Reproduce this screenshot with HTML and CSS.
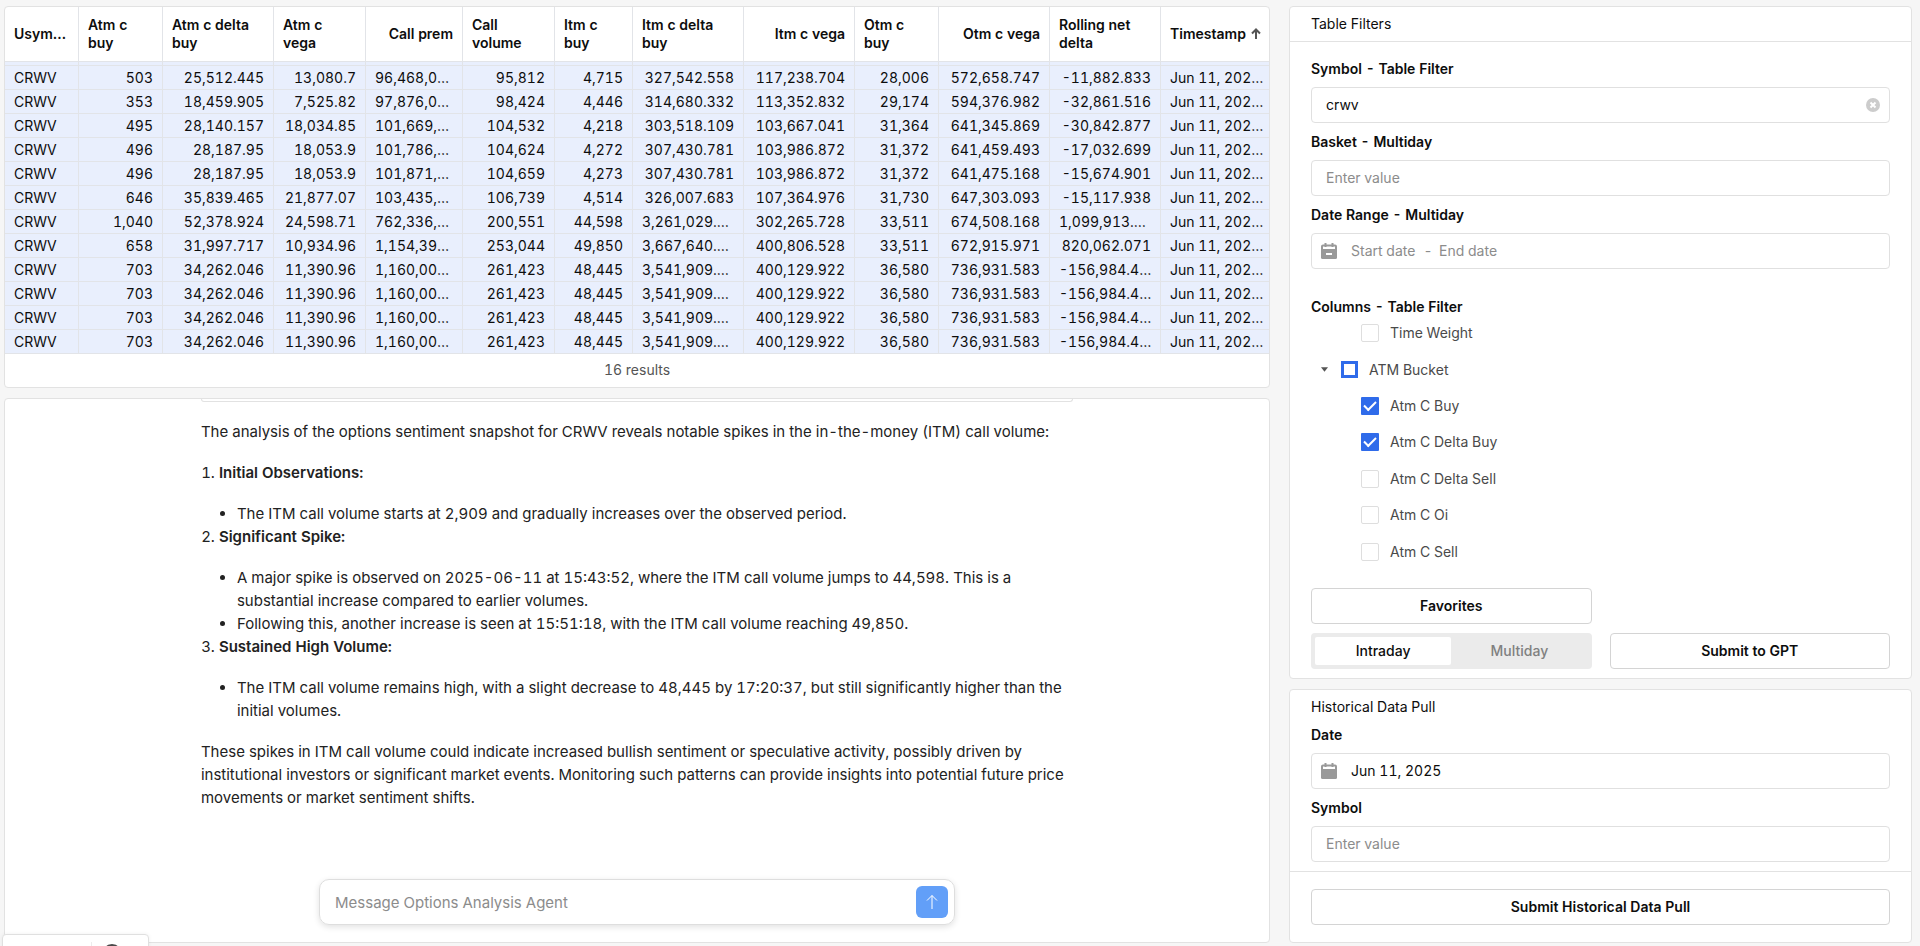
FILE: index.html
```html
<!DOCTYPE html>
<html lang="en">
<head>
  <meta charset="UTF-8">
  <meta name="viewport" content="width=device-width, initial-scale=1.0">
  <title>Options Analysis</title>
  <link rel="stylesheet" href="styles.css">
</head>

<body>
  <main class="main">
    <section class="card table-card">
      <table class="data">
        <colgroup>
          <col class="w-symbol"><col class="w-buy"><col class="w-wide"><col class="w-mid"><col class="w-prem">
          <col class="w-mid"><col class="w-itm"><col class="w-wide"><col class="w-wide"><col class="w-buy">
          <col class="w-wide"><col class="w-wide"><col class="w-wide">
        </colgroup>
        <thead>
          <tr>
            <th class="left">Usym…</th>
            <th class="left">Atm c buy</th>
            <th class="left">Atm c delta buy</th>
            <th class="left">Atm c vega</th>
            <th>Call prem</th>
            <th class="left">Call volume</th>
            <th class="left">Itm c buy</th>
            <th class="left">Itm c delta buy</th>
            <th>Itm c vega</th>
            <th class="left">Otm c buy</th>
            <th>Otm c vega</th>
            <th class="left">Rolling net delta</th>
            <th class="left sorted">Timestamp
              <svg class="sort" viewBox="0 0 12 12"><path d="M6 11V1.5M2 5.5l4-4 4 4"/></svg>
            </th>
          </tr>
        </thead>
        <tbody>
          <tr class="sliver"><td></td><td></td><td></td><td></td><td></td><td></td><td></td><td></td><td></td><td></td><td></td><td></td><td></td></tr>
          <tr><td class="left">CRWV</td><td>503</td><td>25,512.445</td><td>13,080.7</td><td class="left">96,468,0…</td><td>95,812</td><td>4,715</td><td>327,542.558</td><td>117,238.704</td><td>28,006</td><td>572,658.747</td><td>-11,882.833</td><td class="left">Jun 11, 202…</td></tr>
          <tr><td class="left">CRWV</td><td>353</td><td>18,459.905</td><td>7,525.82</td><td class="left">97,876,0…</td><td>98,424</td><td>4,446</td><td>314,680.332</td><td>113,352.832</td><td>29,174</td><td>594,376.982</td><td>-32,861.516</td><td class="left">Jun 11, 202…</td></tr>
          <tr><td class="left">CRWV</td><td>495</td><td>28,140.157</td><td>18,034.85</td><td class="left">101,669,…</td><td>104,532</td><td>4,218</td><td>303,518.109</td><td>103,667.041</td><td>31,364</td><td>641,345.869</td><td>-30,842.877</td><td class="left">Jun 11, 202…</td></tr>
          <tr><td class="left">CRWV</td><td>496</td><td>28,187.95</td><td>18,053.9</td><td class="left">101,786,…</td><td>104,624</td><td>4,272</td><td>307,430.781</td><td>103,986.872</td><td>31,372</td><td>641,459.493</td><td>-17,032.699</td><td class="left">Jun 11, 202…</td></tr>
          <tr><td class="left">CRWV</td><td>496</td><td>28,187.95</td><td>18,053.9</td><td class="left">101,871,…</td><td>104,659</td><td>4,273</td><td>307,430.781</td><td>103,986.872</td><td>31,372</td><td>641,475.168</td><td>-15,674.901</td><td class="left">Jun 11, 202…</td></tr>
          <tr><td class="left">CRWV</td><td>646</td><td>35,839.465</td><td>21,877.07</td><td class="left">103,435,…</td><td>106,739</td><td>4,514</td><td>326,007.683</td><td>107,364.976</td><td>31,730</td><td>647,303.093</td><td>-15,117.938</td><td class="left">Jun 11, 202…</td></tr>
          <tr><td class="left">CRWV</td><td>1,040</td><td>52,378.924</td><td>24,598.71</td><td class="left">762,336,…</td><td>200,551</td><td>44,598</td><td class="left">3,261,029.…</td><td>302,265.728</td><td>33,511</td><td>674,508.168</td><td class="left">1,099,913.…</td><td class="left">Jun 11, 202…</td></tr>
          <tr><td class="left">CRWV</td><td>658</td><td>31,997.717</td><td>10,934.96</td><td class="left">1,154,39…</td><td>253,044</td><td>49,850</td><td class="left">3,667,640.…</td><td>400,806.528</td><td>33,511</td><td>672,915.971</td><td>820,062.071</td><td class="left">Jun 11, 202…</td></tr>
          <tr><td class="left">CRWV</td><td>703</td><td>34,262.046</td><td>11,390.96</td><td class="left">1,160,00…</td><td>261,423</td><td>48,445</td><td class="left">3,541,909.…</td><td>400,129.922</td><td>36,580</td><td>736,931.583</td><td class="left">-156,984.4…</td><td class="left">Jun 11, 202…</td></tr>
          <tr><td class="left">CRWV</td><td>703</td><td>34,262.046</td><td>11,390.96</td><td class="left">1,160,00…</td><td>261,423</td><td>48,445</td><td class="left">3,541,909.…</td><td>400,129.922</td><td>36,580</td><td>736,931.583</td><td class="left">-156,984.4…</td><td class="left">Jun 11, 202…</td></tr>
          <tr><td class="left">CRWV</td><td>703</td><td>34,262.046</td><td>11,390.96</td><td class="left">1,160,00…</td><td>261,423</td><td>48,445</td><td class="left">3,541,909.…</td><td>400,129.922</td><td>36,580</td><td>736,931.583</td><td class="left">-156,984.4…</td><td class="left">Jun 11, 202…</td></tr>
          <tr><td class="left">CRWV</td><td>703</td><td>34,262.046</td><td>11,390.96</td><td class="left">1,160,00…</td><td>261,423</td><td>48,445</td><td class="left">3,541,909.…</td><td>400,129.922</td><td>36,580</td><td>736,931.583</td><td class="left">-156,984.4…</td><td class="left">Jun 11, 202…</td></tr>
        </tbody>
      </table>
      <div class="results">16 results</div>
    </section>

    <section class="card chat">
      <div class="message">
        <div class="previous"></div>
        <p>The analysis of the options sentiment snapshot for CRWV reveals notable spikes in the in-the-money (ITM) call volume:</p>
        <ol>
          <li><strong>Initial Observations:</strong>
            <ul>
              <li>The ITM call volume starts at 2,909 and gradually increases over the observed period.</li>
            </ul>
          </li>
          <li><strong>Significant Spike:</strong>
            <ul>
              <li>A major spike is observed on 2025-06-11 at 15:43:52, where the ITM call volume jumps to 44,598. This is a substantial increase compared to earlier volumes.</li>
              <li>Following this, another increase is seen at 15:51:18, with the ITM call volume reaching 49,850.</li>
            </ul>
          </li>
          <li><strong>Sustained High Volume:</strong>
            <ul>
              <li>The ITM call volume remains high, with a slight decrease to 48,445 by 17:20:37, but still significantly higher than the initial volumes.</li>
            </ul>
          </li>
        </ol>
        <p>These spikes in ITM call volume could indicate increased bullish sentiment or speculative activity, possibly driven by institutional investors or significant market events. Monitoring such patterns can provide insights into potential future price movements or market sentiment shifts.</p>
      </div>
      <form class="composer">
        <input type="text" placeholder="Message Options Analysis Agent" aria-label="Message">
        <button type="button" class="send" aria-label="Send">
          <svg viewBox="0 0 18 18"><path d="M9 16V2.5M4 7.5l5-5 5 5"/></svg>
        </button>
      </form>
    </section>
  </main>

  <aside class="side">
    <section class="card filters">
      <h2 class="card-header">Table Filters</h2>
      <div class="filters-body">
        <label class="label" for="symbolFilter">Symbol - Table Filter</label>
        <div class="field">
          <input id="symbolFilter" type="text" value="crwv">
          <button type="button" class="clear" aria-label="Clear">
            <svg viewBox="0 0 14 14"><circle cx="7" cy="7" r="7"/><path d="M4.5 4.5l5 5M9.5 4.5l-5 5"/></svg>
          </button>
        </div>

        <label class="label" for="basket">Basket - Multiday</label>
        <div class="field">
          <input id="basket" type="text" placeholder="Enter value">
        </div>

        <label class="label" for="startDate">Date Range - Multiday</label>
        <div class="field dates">
          <svg class="calendar" viewBox="0 0 16 16"><path class="frame" d="M1 6V3.5a1 1 0 0 1 1-1h12a1 1 0 0 1 1 1V6M4.5 0v4M11.5 0v4"/><path d="M0 6h16v8.500a1.500 1.500 0 0 1-1.500 1.500h-13a1.500 1.500 0 0 1-1.500-1.500z"/><path class="dash" d="M5 11h6"/></svg>
          <input id="startDate" class="start" type="text" placeholder="Start date">
          <span class="to">-</span>
          <input class="end" type="text" placeholder="End date" aria-label="End date">
        </div>

        <h3 class="tree-title">Columns - Table Filter</h3>
        <div class="tree">
          <label class="leaf"><input type="checkbox">Time Weight</label>
          <label class="branch"><svg class="caret" viewBox="0 0 8 5"><path d="M0 0h8L4 5z"/></svg><input type="checkbox" class="partial">ATM Bucket</label>
          <label class="leaf"><input type="checkbox" checked>Atm C Buy</label>
          <label class="leaf"><input type="checkbox" checked>Atm C Delta Buy</label>
          <label class="leaf"><input type="checkbox">Atm C Delta Sell</label>
          <label class="leaf"><input type="checkbox">Atm C Oi</label>
          <label class="leaf"><input type="checkbox">Atm C Sell</label>
        </div>

        <div class="actions">
          <button type="button" class="btn">Favorites</button>
          <div class="segment">
            <button type="button" class="active">Intraday</button>
            <button type="button">Multiday</button>
          </div>
          <button type="button" class="btn">Submit to GPT</button>
        </div>
      </div>
    </section>

    <section class="card history">
      <div class="history-body">
        <h2 class="history-title">Historical Data Pull</h2>
        <label class="label" for="date">Date</label>
        <div class="field">
          <svg class="calendar" viewBox="0 0 16 16"><path class="frame" d="M1 6V3.5a1 1 0 0 1 1-1h12a1 1 0 0 1 1 1V6M4.5 0v4M11.5 0v4"/><path d="M0 6h16v8.500a1.500 1.500 0 0 1-1.500 1.500h-13a1.500 1.500 0 0 1-1.500-1.500z"/></svg>
          <input id="date" type="text" value="Jun 11, 2025">
        </div>
        <label class="label" for="symbol">Symbol</label>
        <div class="field">
          <input id="symbol" type="text" placeholder="Enter value">
        </div>
      </div>
      <div class="history-footer">
        <button type="button" class="btn">Submit Historical Data Pull</button>
      </div>
    </section>
  </aside>

  <!-- toolbar docked under the bottom edge -->
  <div class="dock">
    <span class="dock-empty"></span>
    <span class="dock-dot"></span>
  </div>
</body>
</html>
```
FILE: styles.css
```css
* {
  box-sizing: border-box;
}

body {
  margin: 0;
  padding: 6px 8px 3px 4px;
  min-height: 100vh;
  display: grid;
  grid-template-columns: 1266fr 623fr;
  gap: 19px;
  background: #f6f6f6;
  color: #0d0d0d;
  font-family: Inter, "Liberation Sans", sans-serif;
  font-size: 14px;
  font-variant-numeric: tabular-nums;
  line-height: 18px;
}

input,
button {
  font: inherit;
  font-variant-numeric: tabular-nums;
  color: inherit;
  margin: 0;
}

button {
  cursor: pointer;
}

.main,
.side {
  display: flex;
  flex-direction: column;
  gap: 10px;
  min-width: 0;
}

.card {
  background: #fff;
  border: 1px solid #e2e2e2;
  border-radius: 4px;
}

/* table */
.table-card {
  overflow: hidden;
}

.data {
  width: 100%;
  table-layout: fixed;
  border-collapse: separate;
  border-spacing: 0;
}

.w-symbol { width: 74px; }
.w-buy { width: 84px; }
.w-mid { width: 92px; }
.w-prem { width: 97px; }
.w-itm { width: 78px; }
.w-wide { width: 111px; }

/* the last column takes what is left */
.w-wide:last-child { width: auto; }

.data th,
.data td {
  padding: 0 9px;
  text-align: right;
  border-right: 1px solid #e2e4e8;
  border-bottom: 1px solid #e2e4e8;
}

.data th:last-child,
.data td:last-child {
  border-right: 0;
}

.data th {
  height: 55px;
  font-weight: 600;
}

.data td {
  height: 24px;
  background: #e9effd;
  white-space: nowrap;
}

.data .sliver td {
  height: 4px;
}

.data .left {
  text-align: left;
}

.data .sorted {
  white-space: nowrap;
}

.sort {
  width: 12px;
  height: 12px;
  vertical-align: -1px;
  fill: none;
  stroke: #555;
  stroke-width: 2;
}

.results {
  padding: 7px 0 8px;
  text-align: center;
  color: #555;
}

/* chat */
.chat {
  flex: 1;
  display: flex;
  flex-direction: column;
  align-items: center;
  font-size: 15px;
  line-height: 23px;
  color: #222;
}

.message {
  width: 69%;
}

.previous {
  height: 3px;
  border: 1px solid #e2e2e2;
  border-top: 0;
  border-radius: 0 0 4px 4px;
}

.message p,
.message ol {
  margin: 18px 0;
}

.message ol {
  padding-left: 18px;
}

.message ul {
  margin: 18px 0 0;
  padding-left: 18px;
  list-style: disc;
}

.message strong {
  font-weight: 600;
}

.composer {
  width: 636px;
  max-width: 90%;
  margin-top: auto;
  margin-bottom: 17px;
  padding: 6px 6px 6px 15px;
  display: flex;
  border: 1px solid #dedede;
  border-radius: 10px;
  box-shadow: 0 2px 6px rgba(0, 0, 0, 0.12);
}

.composer input {
  flex: 1;
  padding: 0;
  border: 0;
  outline: 0;
  background: none;
}

.send {
  width: 32px;
  height: 32px;
  padding: 7px;
  border: 0;
  border-radius: 6px;
  background: #629ff8;
}

.send svg {
  display: block;
  width: 18px;
  height: 18px;
  fill: none;
  stroke: #fff;
  stroke-width: 1;
}

::placeholder {
  color: #8c8c8c;
  opacity: 1;
}

/* filters */
.filters {
  flex: 1;
  display: flex;
  flex-direction: column;
}

.card-header {
  margin: 0;
  padding: 8px 21px;
  border-bottom: 1px solid #e2e2e2;
  font-size: 14px;
  font-weight: 400;
}

.filters-body {
  flex: 1;
  display: flex;
  flex-direction: column;
  padding: 8px 21px 9px;
}

.label {
  display: block;
  line-height: 37px;
  font-weight: 600;
}

.field {
  height: 36px;
  display: flex;
  align-items: center;
  padding: 0 9px 0 14px;
  border: 1px solid #e0e0e0;
  border-radius: 4px;
}

.field input {
  flex: 1;
  min-width: 0;
  padding: 0;
  border: 0;
  outline: 0;
  background: none;
}

.field:has(.calendar) {
  padding-left: 9px;
}

.calendar {
  width: 16px;
  height: 16px;
  margin-right: 14px;
  fill: #999;
}

.calendar .frame {
  fill: none;
  stroke: #999;
  stroke-width: 2;
}

.calendar .dash {
  stroke: #fff;
  stroke-width: 2;
}

.dates .start {
  flex: 0 0 66px;
}

.to {
  width: 22px;
  text-align: center;
  color: #8c8c8c;
}

.clear {
  padding: 0;
  border: 0;
  background: none;
}

.clear svg {
  display: block;
  width: 14px;
  height: 14px;
  fill: #ccc;
  stroke: #fff;
  stroke-width: 2;
}

.clear circle {
  stroke: none;
}

.tree-title {
  margin: 30px 0 0;
  font-size: 14px;
  line-height: 16px;
  font-weight: 600;
}

.tree {
  flex: 1;
  display: grid;
  grid-auto-rows: 1fr;
  margin-bottom: 18px;
  color: #4a4a4a;
}

.tree label {
  display: flex;
  align-items: center;
}

.leaf {
  padding-left: 50px;
}

.branch {
  padding-left: 10px;
}

.caret {
  width: 7px;
  height: 5px;
  margin-right: 13px;
  fill: #555;
}

.tree input {
  appearance: none;
  width: 18px;
  height: 18px;
  margin-right: 11px;
  border: 1px solid #dedede;
  border-radius: 2px;
  background: #fff;
}

.tree input:checked {
  display: grid;
  place-items: center;
  border: 0;
  border-radius: 1px;
  background: #2f6bea;
}

.tree input:checked::after {
  content: "";
  width: 10px;
  height: 5px;
  margin-bottom: 3px;
  border-left: 2px solid #fff;
  border-bottom: 2px solid #fff;
  transform: rotate(-45deg);
}

.tree .partial {
  width: 17px;
  height: 17px;
  border: 3px solid #2f6bea;
  border-radius: 0;
}

.actions {
  display: grid;
  grid-template-columns: 1fr 1fr;
  gap: 9px 18px;
}

.segment {
  grid-column: 1;
  display: grid;
  grid-template-columns: 1fr 1fr;
  padding: 4px;
  background: #ebebeb;
  border-radius: 4px;
}

.segment button {
  padding: 0;
  border: 0;
  background: none;
  color: #808080;
  font-weight: 500;
}

.segment .active {
  background: #fff;
  color: #0d0d0d;
  border-radius: 2px;
}

.btn {
  height: 36px;
  padding: 0;
  border: 1px solid #d4d4d4;
  border-radius: 4px;
  background: #fff;
  font-weight: 600;
}

/* historical pull */
.history-body {
  padding: 8px 21px 9px;
}

.history-title {
  margin: 0;
  font-size: 14px;
  font-weight: 400;
}

.history-footer {
  padding: 17px 21px;
  border-top: 1px solid #e2e2e2;
}

.history-footer .btn {
  display: block;
  width: 100%;
}

.dock {
  position: fixed;
  left: 2px;
  bottom: -28px;
  width: 147px;
  height: 40px;
  display: flex;
  align-items: center;
  gap: 10px;
  border: 1px solid #e0e0e0;
  border-radius: 4px;
  background: #fff;
  box-shadow: 0 0 4px rgba(0, 0, 0, 0.06);
}

.dock-empty {
  width: 89px;
  height: 24px;
  border-right: 1px solid #ececec;
}

.dock-dot {
  width: 20px;
  height: 20px;
  border-radius: 50%;
  background: #4a4a4a;
}
```
